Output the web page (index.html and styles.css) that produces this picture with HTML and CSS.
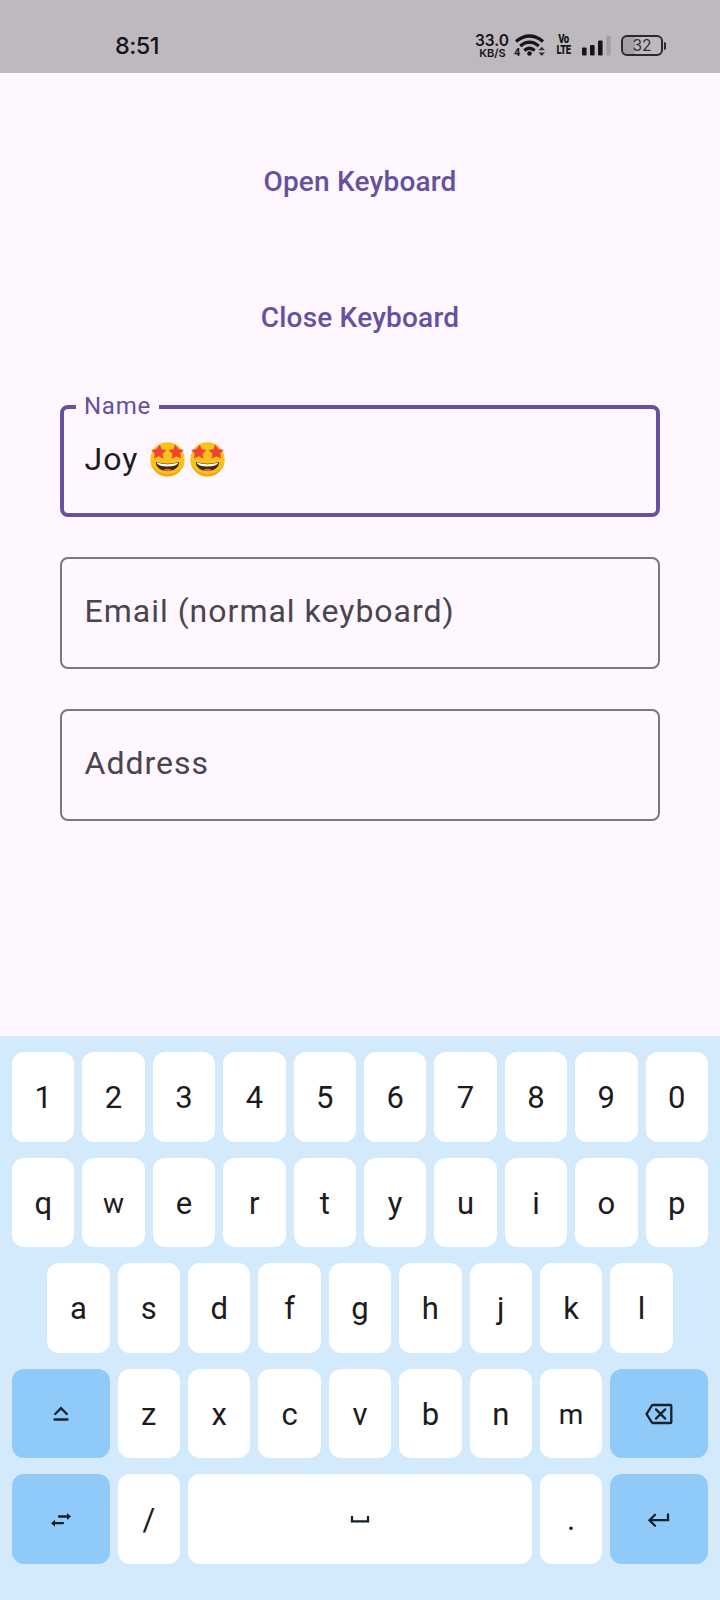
FILE: index.html
```html
<!DOCTYPE html>
<html lang="en">
<head>
<meta charset="utf-8">
<title>Keyboard demo</title>
<link rel="stylesheet" href="styles.css">
</head>
<body>
<div class="screen">
  <header class="status">
    <span class="time">8:51</span>
    <div class="tray">
      <div class="speed"><span>33.0</span><small>KB/S</small></div>
      <svg class="wifi" width="32" height="26" viewBox="0 0 32 26">
        <g fill="none" stroke="#161418" stroke-width="3.2">
          <path d="M2 8.500Q15.500-2.500 29 8.500"/>
          <path d="M6.200 13Q15.500 5.200 24.800 13"/>
          <path d="M10.300 17.500Q15.500 13 20.700 17.500"/>
        </g>
        <circle cx="15.500" cy="20.500" r="2.300" fill="#161418"/>
        <path d="M24.500 17.300L27.800 13.700 31 17.300zM24.500 19.500L27.800 23.100 31 19.500z" fill="#343136"/>
        <text x="0" y="23" class="band">4</text>
      </svg>
      <div class="volte"><span>Vo</span><span>LTE</span></div>
      <svg class="signal" width="29" height="21" viewBox="0 0 29 21">
        <g fill="#161418"><rect y="12.500" width="4.600" height="8" rx="1"/><rect x="8" y="10" width="4.600" height="10.500" rx="1"/><rect x="16" y="5.500" width="4.600" height="15" rx="1"/></g>
        <rect x="24.300" y="0.500" width="4.300" height="20" rx="1" fill="#a39ea5"/>
      </svg>
      <div class="battery"><span>32</span></div>
    </div>
  </header>

  <main class="content">
    <button class="link">Open Keyboard</button>
    <button class="link">Close Keyboard</button>
    <div class="fields">
      <div class="field active">
        <span class="label">Name</span>
        <span>Joy</span>
        <svg class="emoji" width="35" height="35" viewBox="0 0 35 35">
          <circle cx="17.500" cy="17.500" r="17.200" fill="#fcc21b"/>
          <path d="M.8 21A17.200 17.200 0 0 0 34.200 21Q29 32 17.500 32T.8 21z" fill="#f2a51d"/>
          <path d="M5.800 20Q17.500 23.500 29.200 20C29 32 6 32 5.800 20z" fill="#422b0d"/>
          <path d="M6.500 20.600Q17.500 24 28.500 20.600Q27 24.500 17.500 24.500T6.500 20.600z" fill="#fff"/>
          <path d="M12.500 28.200Q17.500 25.500 22.500 28.200Q17.500 30.200 12.500 28.200z" fill="#d9604f"/>
          <g fill="#f2432f">
            <path d="M10 2.500L11.500 7.300 16.600 8.200 12.600 11.600 13.300 16.700 8.700 14.300 4 16.400 4.800 11.500 1.200 7.900 6.300 7.200z"/>
            <path d="M25 2.500L23.500 7.300 18.400 8.200 22.400 11.600 21.700 16.700 26.300 14.300 31 16.400 30.200 11.500 33.800 7.900 28.700 7.200z"/>
          </g>
        </svg>
        <svg class="emoji" width="35" height="35" viewBox="0 0 35 35">
          <circle cx="17.500" cy="17.500" r="17.200" fill="#fcc21b"/>
          <path d="M.8 21A17.200 17.200 0 0 0 34.200 21Q29 32 17.500 32T.8 21z" fill="#f2a51d"/>
          <path d="M5.800 20Q17.500 23.500 29.200 20C29 32 6 32 5.800 20z" fill="#422b0d"/>
          <path d="M6.500 20.600Q17.500 24 28.500 20.600Q27 24.500 17.500 24.500T6.500 20.600z" fill="#fff"/>
          <path d="M12.500 28.200Q17.500 25.500 22.500 28.200Q17.500 30.200 12.500 28.200z" fill="#d9604f"/>
          <g fill="#f2432f">
            <path d="M10 2.500L11.500 7.300 16.600 8.200 12.600 11.600 13.300 16.700 8.700 14.300 4 16.400 4.800 11.500 1.200 7.900 6.300 7.200z"/>
            <path d="M25 2.500L23.500 7.300 18.400 8.200 22.400 11.600 21.700 16.700 26.300 14.300 31 16.400 30.200 11.500 33.800 7.900 28.700 7.200z"/>
          </g>
        </svg>
      </div>
      <div class="field">Email (normal keyboard)</div>
      <div class="field">Address</div>
    </div>
  </main>

  <section class="keyboard">
    <div class="row"><b>1</b><b>2</b><b>3</b><b>4</b><b>5</b><b>6</b><b>7</b><b>8</b><b>9</b><b>0</b></div>
    <div class="row"><b>q</b><b class="fit">w</b><b>e</b><b>r</b><b>t</b><b>y</b><b>u</b><b>i</b><b>o</b><b>p</b></div>
    <div class="row inset"><b>a</b><b>s</b><b>d</b><b>f</b><b>g</b><b>h</b><b>j</b><b>k</b><b>l</b></div>
    <div class="row">
      <b class="action"><svg width="24" height="24" viewBox="0 0 24 24"><path d="M6.200 12L12 6.200 17.800 12M5.500 17.500H18.500"/></svg></b>
      <b>z</b><b>x</b><b>c</b><b>v</b><b>b</b><b>n</b><b class="fit">m</b>
      <b class="action"><svg width="28" height="24" viewBox="0 0 28 24"><path d="M8 3H25.500Q26.300 3 26.300 3.800V20.200Q26.300 21 25.500 21H8Q7.200 21 6.800 20.300L1.600 12 6.800 3.700Q7.200 3 8 3zM11 7.400L20.200 16.600M20.200 7.400L11 16.600"/></svg></b>
    </div>
    <div class="row">
      <b class="action"><svg width="24" height="24" viewBox="0 0 24 24"><path d="M10 8.500H19M14 15.200H5"/><path class="solid" d="M18 5L22 8.500 18 12zM6 11.700L2 15.200 6 18.700z"/></svg></b>
      <b>/</b>
      <b class="space"><svg width="24" height="24" viewBox="0 0 24 24"><path d="M4 9V14.300H20V9"/></svg></b>
      <b>.</b>
      <b class="action"><svg width="24" height="24" viewBox="0 0 24 24"><path d="M21 6.500V12.200H3M8 6.700L2.500 12.200 8 17.700"/></svg></b>
    </div>
  </section>
</div>
</body>
</html>
```

FILE: styles.css
```css
* { box-sizing: border-box; }
body { margin: 0; font-family: Roboto, "Liberation Sans", sans-serif; }
.screen { width: 720px; height: 1600px; display: flex; flex-direction: column; background: #fef7ff; }

.status { height: 72.500px; display: flex; justify-content: space-between; padding: 33px 54px 0 115px; background: #beb9bf; color: #161418; }
.time { font: 500 23.500px/26px Inter, sans-serif; letter-spacing: -0.6px; }
.tray { display: flex; align-items: flex-start; height: 27px; }
.speed { width: 34px; display: flex; flex-direction: column; align-items: center; font: 600 15.500px/15px Inter, sans-serif; white-space: nowrap; }
.speed small { font-size: 11px; line-height: 10px; margin-left: 1px; }
.wifi { margin: 0 0 0 5px; }
.band { font: bold 11px Roboto, sans-serif; fill: #161418; }
.volte { width: 17px; margin: 1px 0 0 9px; display: flex; flex-direction: column; align-items: center; font: 900 12px/11px Roboto, sans-serif; letter-spacing: -0.6px; transform: scaleX(0.8); }
.signal { margin: 2px 0 0 10px; }
.battery { width: 42px; height: 21px; margin: 2px 3px 0 10px; border: 2px solid #2c292e; border-radius: 6px; position: relative; font: 15.500px/17px Inter, sans-serif; text-align: center; color: #333035; background: linear-gradient(90deg, #a5a0a7 12px, transparent 12px); }
.battery::after { content: ""; position: absolute; right: -5px; top: 5px; width: 2px; height: 8px; border-radius: 0 2px 2px 0; background: #2c292e; }

.content { flex: 1; display: flex; flex-direction: column; align-items: center; padding-top: 60.500px; }
.link { height: 96px; margin-bottom: 40px; border: 0; padding: 1px 0 0; background: none; color: #65519e; font: 500 28px/40px Roboto, sans-serif; letter-spacing: 0.2px; }
.fields { width: 600px; display: flex; flex-direction: column; gap: 40px; }
.field { height: 112px; display: flex; align-items: center; padding: 0 22.500px 4px; border: 2px solid #7d7680; border-radius: 8px; color: #49454f; font-size: 32px; letter-spacing: 1px; position: relative; }
.field.active { border: 4px solid #65519e; padding: 0 20.500px 4px; color: #1d1b20; }
.label { position: absolute; left: 12px; top: -19px; padding: 0 8px; background: #fef7ff; color: #65519e; font-size: 24px; line-height: 32px; letter-spacing: 0.75px; }
.emoji { margin: 0 0 0 5px; }
.field span + .emoji { margin-left: 12px; }

.keyboard { height: 564px; padding: 16px 12px 0; display: flex; flex-direction: column; gap: 16px; background: #d3e9fc; }
.row { height: 89.500px; display: flex; gap: 8px; }
.inset { padding: 0 35.200px; }
.row b { width: 62.400px; flex: none; display: flex; align-items: center; justify-content: center; padding-top: 2px; border-radius: 12px; background: #fff; color: #1d1b20; font-weight: 400; font-size: 31px; }
.row .fit { font-size: 28px; }
.row .action { width: 97.600px; background: #90caf9; padding-top: 1.500px; }
.row .space { width: 344px; padding-top: 0; }
.row svg { fill: none; stroke: #16202b; stroke-width: 2.3; stroke-linecap: round; }
.row .space svg { stroke-linecap: butt; }
.row .solid { fill: #16202b; stroke: none; }
```
